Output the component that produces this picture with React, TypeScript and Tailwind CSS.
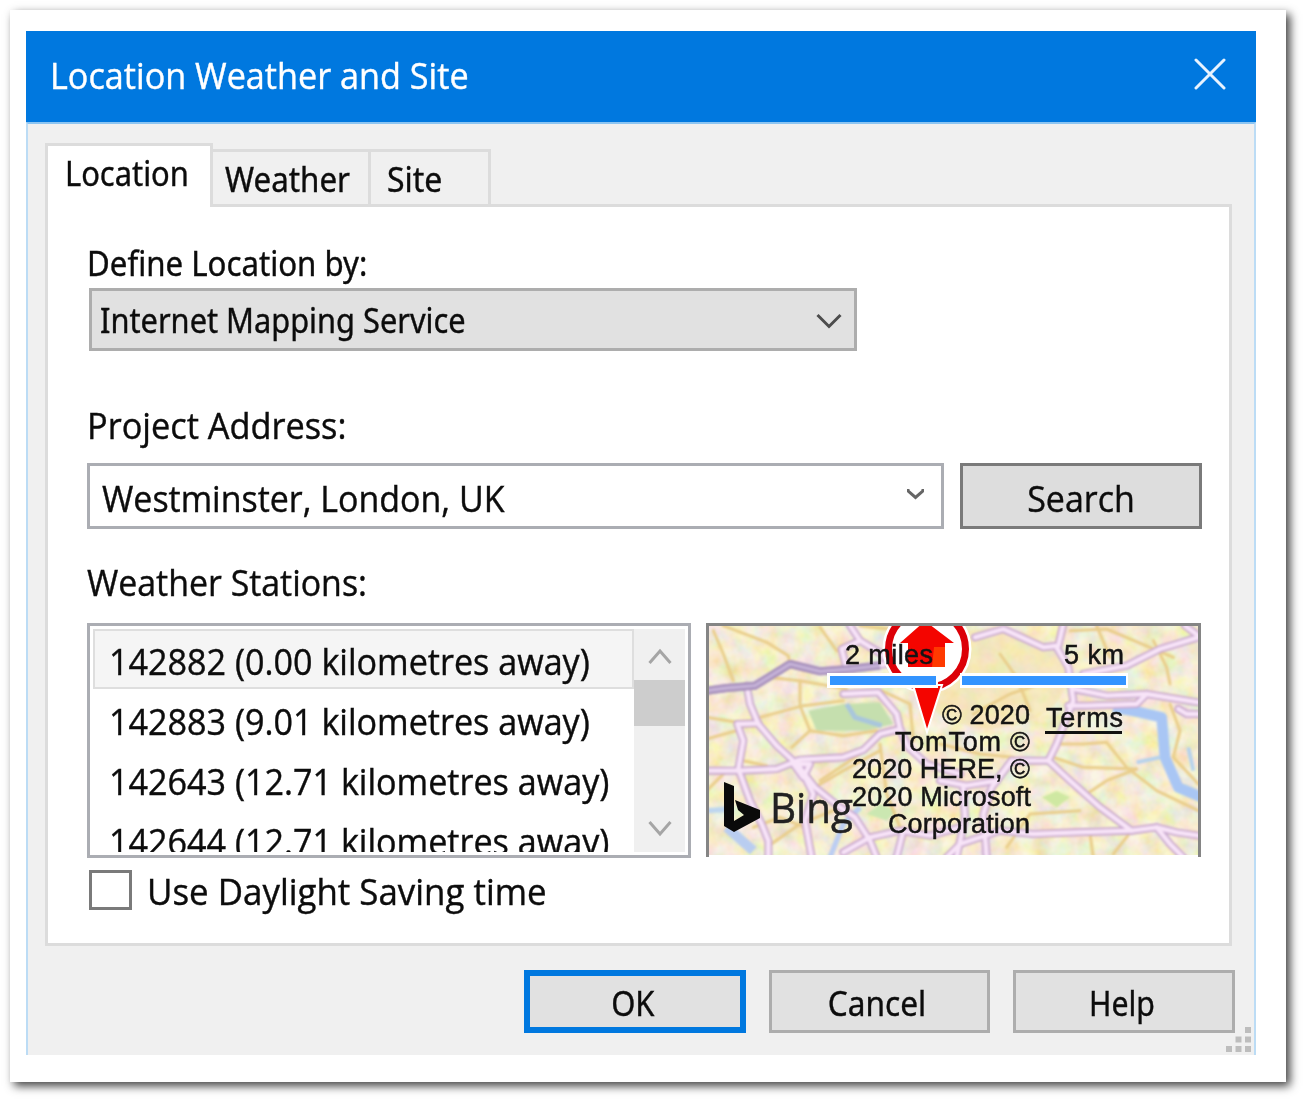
import React from "react";

const segoe = "font-['Open_Sans',sans-serif] text-[36px] leading-[40px] whitespace-nowrap inline-block [-webkit-text-stroke:0.4px]";
const tahoma = "font-['Noto_Sans',sans-serif] text-[34px] leading-[40px] whitespace-nowrap inline-block [-webkit-text-stroke:0.4px]";

const stations = [
  { text: "142882 (0.00 kilometres away)", selected: true },
  { text: "142883 (9.01 kilometres away)", selected: false },
  { text: "142643 (12.71 kilometres away)", selected: false },
  { text: "142644 (12.71 kilometres away)", selected: false },
];

const westRoads = [
  "M20 230 L80 222 L165 215 L205 190 L270 150 L360 172 L450 165 L560 150",
  "M140 215 L150 270 L175 330 L230 395 L290 450 L345 520 L420 580 L465 610 L510 680 L530 730",
  "M175 328 L112 330 L130 380 L115 465 L150 560 L185 630 L205 680 L205 730",
  "M20 470 L120 470 L230 465 L300 437 L430 430 L490 408 L540 360 L600 345 L590 300 L535 235 L430 240",
  "M290 440 L340 540 L315 620 L335 730",
  "M450 35 L480 80 L425 105 L440 165",
  "M480 80 L545 120 L600 190",
  "M600 345 L625 400 L680 450 L780 480",
  "M430 715 L510 670 L600 650 L690 665 L780 640",
  "M610 650 L590 730",
  "M280 450 L330 450 L310 490 Z",
];
const eastRoads = [
  "M105 70 L190 45 L310 100 L355 95 L370 30",
  "M350 100 L385 160 L400 260 L350 390 L325 440",
  "M430 180 L560 155 L660 105 L775 70",
  "M400 225 L500 245 L620 240 L775 265",
  "M385 275 L440 275 L590 270 L620 240",
  "M0 500 L80 515 L170 500 L215 440 L325 440 L390 500 L480 580 L575 650 L650 640 L710 655 L775 665",
  "M215 440 L155 520 L130 600 L140 730",
  "M575 650 L410 655 L280 660 L180 650 L60 690 L20 730",
  "M650 640 L690 690 L730 730",
  "M70 520 L75 610 L50 730",
  "M735 35 L775 65",
  "M715 285 L740 300 L775 300",
];
const westLanes = [
  "M70 35 L200 85 L265 125 L270 150", "M40 50 L70 120 L100 200", "M20 310 L110 325",
  "M20 375 L110 350", "M205 190 L300 200 L440 225", "M180 310 L310 275 L430 260",
  "M300 200 L300 275 L330 350 L275 400", "M330 350 L430 365 L530 350", "M130 440 L200 455",
  "M345 520 L430 470 L540 410", "M200 700 L300 630 L400 590", "M360 40 L410 110",
  "M20 530 L80 470", "M540 390 L560 540 L600 640", "M480 35 L610 50", "M360 500 L450 440 L480 420",
  "M160 640 L240 610 L315 640", "M545 230 L630 270 L640 380",
];
const eastLanes = [
  "M350 390 L430 390 L500 385 L560 460 L650 530 L775 590", "M340 430 L430 460 L590 465",
  "M590 465 L500 500 L440 540", "M690 270 L720 350 L700 430 L775 510", "M470 35 L510 130",
  "M640 80 L680 160 L690 210", "M180 120 L230 190 L270 290", "M100 300 L210 240 L390 180",
  "M200 700 L270 600 L420 590", "M450 660 L460 730", "M520 720 L575 650", "M0 390 L120 420 L220 430",
  "M390 50 L500 45 L700 130",
];

function Roads({ lanes, roads }: { lanes: string[]; roads: string[] }) {
  return (
    <g fill="none" strokeLinejoin="round" strokeLinecap="round">
      {lanes.map((d) => <path key={d} d={d} stroke="#e9cd8a" strokeWidth="9" />)}
      {roads.map((d) => <path key={d} d={d} stroke="#c9a8cf" strokeWidth="24" />)}
      {roads.map((d) => <path key={d} d={d} stroke="#f8e4f8" strokeWidth="13" />)}
    </g>
  );
}

function MapView() {
  return (
    <svg viewBox="0 0 495 234" className="block h-[234px] w-[495px]">
      <defs>
        <filter id="mottle" x="0" y="0" width="100%" height="100%">
          <feTurbulence type="fractalNoise" baseFrequency="0.055" numOctaves="3" seed="7" />
          <feColorMatrix values="0.7 0 0 0 0.57  0 0.6 0 0 0.57  0 0 1.1 0 0.18  0 0 0 0 1" />
        </filter>
        <filter id="soft"><feGaussianBlur stdDeviation="1" /></filter>
        <clipPath id="view"><rect x="2" y="2" width="491" height="230" /></clipPath>
      </defs>
      <g clipPath="url(#view)">
        <rect width="495" height="234" fill="#f3e8bd" />
        <rect width="495" height="234" filter="url(#mottle)" opacity="0.6" />
        <g filter="url(#soft)">
          <ellipse cx="285" cy="55" rx="75" ry="50" fill="#f5dfa2" opacity="0.45" />
          <g transform="translate(-6 -9) scale(.33333)">
            <path d="M325 290 L430 270 L540 265 L580 330 L500 350 L350 350 Z" fill="#c5dfae" />
            <path d="M440 270 L465 310 L545 335" fill="none" stroke="#a9c6dc" strokeWidth="15" />
            <path d="M80 640 L160 710" stroke="#b9cdf0" strokeWidth="30" />
            <path d="M390 730 L430 630 L480 580" fill="none" stroke="#bccdf2" strokeWidth="16" />
            <path d="M20 590 L100 585" stroke="#bdd5ef" strokeWidth="16" />
            <path d="M540 570 L590 590 L560 620 L500 600Z" fill="#cbe7b1" />
          </g>
          <g transform="translate(234 -9) scale(.33333)">
            <path d="M520 280 L600 295 L665 310 L675 430 L715 520 L785 550" fill="none" stroke="#a9c6f4" strokeWidth="32" strokeLinejoin="round" />
            <path d="M590 445 L660 430 M745 400 L760 470" fill="none" stroke="#b5d2ec" strokeWidth="12" />
            <path d="M305 550 L350 530 L390 550 L350 580Z" fill="#cfe8a2" />
          </g>
          <g transform="translate(-6 -9) scale(.33333)">
            <Roads lanes={westLanes} roads={westRoads} />
            <path d="M20 230 L80 222 L165 215 L205 190 L270 150 L360 172 L450 165 L540 155" fill="none" stroke="#a48dba" strokeWidth="24" strokeLinejoin="round" />
            <path d="M20 230 L80 222 L165 215 L205 190 L270 150 L360 172 L450 165 L540 155" fill="none" stroke="#c6b3d8" strokeWidth="10" strokeLinejoin="round" />
          </g>
          <g transform="translate(234 -9) scale(.33333)">
            <Roads lanes={eastLanes} roads={eastRoads} />
          </g>
        </g>

        <circle cx="221" cy="26" r="39" fill="none" stroke="#fff" strokeWidth="11" />
        <circle cx="221" cy="26" r="37" fill="#fff" />
        <circle cx="221" cy="26" r="38.5" fill="none" stroke="#dc0008" strokeWidth="7" />
        <path d="M219 -2 L248 20 L239 20 L239 44 L202 44 L202 20 L194 20 Z" fill="#f40500" />
        <path d="M228 24 H239 V44 H226 Z" fill="#ff3a00" />
        <path d="M207 62 L236 62 L221 109 Z" fill="#f40500" stroke="#fff" strokeWidth="2" />

        <rect x="121" y="50" width="111" height="15" fill="#fff" />
        <rect x="254" y="50" width="168" height="15" fill="#fff" />
        <rect x="124" y="53" width="106" height="9" fill="#3394ff" />
        <rect x="256" y="53" width="164" height="9" fill="#3394ff" />

        <g fontFamily="Liberation Sans, Arial, sans-serif" fontSize="27" fill="#141414" stroke="#141414" strokeWidth="0.5">
          <text x="139" y="41" textLength="88">2 miles</text>
          <text x="358" y="41" textLength="60">5 km</text>
          <text x="236" y="101" textLength="88">© 2020</text>
          <text x="189" y="128" textLength="135">TomTom ©</text>
          <text x="146" y="155" textLength="178">2020 HERE, ©</text>
          <text x="146" y="183" textLength="179">2020 Microsoft</text>
          <text x="182" y="210" textLength="142">Corporation</text>
          <text x="340" y="104" textLength="77">Terms</text>
        </g>
        <rect x="339" y="108" width="77" height="3" fill="#111" />

        <path d="M18 159 L28 163 L28 198 L38 192 L32 187 L29 177 L54 187 L54 195 L28 209 L18 203 Z" fill="#0a0a0a" />
        <text x="64" y="200" fontFamily="Open Sans, sans-serif" fontSize="42" fill="#222" stroke="#222" strokeWidth="0.5" textLength="83" lengthAdjust="spacingAndGlyphs">Bing</text>
      </g>
      <path d="M1.5 234 V1.5 H493.5 V234" fill="none" stroke="#858585" strokeWidth="3" />
    </svg>
  );
}

function Chevron({ className, d, box, width }: { className: string; d: string; box: string; width: number }) {
  return (
    <svg viewBox={box} className={className} fill="none" stroke="currentColor" strokeWidth={width}>
      <path d={d} />
    </svg>
  );
}

export default function App() {
  return (
    <div className="h-[1102px] w-[1306px] overflow-hidden bg-white pt-[10px] pl-[10px] text-[#0c0c0c]">
      <div className="h-[1072px] w-[1276px] bg-white pt-[21px] pl-4 shadow-[4px_4px_9px_0px_rgba(0,0,0,0.75)]">
        <div className="flex h-[1024px] w-[1230px] flex-col bg-[#f0f0f0]">
          <header className="flex h-[91px] shrink-0 items-center justify-between bg-[#0078df] pb-[5px] pr-[30px] pl-6 text-white">
            <span className={`${segoe} mt-1 origin-left scale-x-[0.95]`}>Location Weather and Site</span>
            <svg viewBox="0 0 32 32" className="h-8 w-8" stroke="#e8f3ff" strokeWidth="3" strokeLinecap="round">
              <path d="M2 2 L30 30 M30 2 L2 30" />
            </svg>
          </header>

          <main className="relative flex-1 border-x-2 border-t-2 border-x-[#bcdcf5] border-t-[#8cc5f2] pt-[19px] pl-[17px]">
            <nav className="flex h-[61px] items-end">
              <div className="relative z-10 -mb-[3px] h-[64px] w-[168px] self-start border-x-[3px] border-t-[3px] border-[#dcdcdc] bg-white pt-[7px] pl-[17px]">
                <span className={`${tahoma} origin-left scale-x-[0.908]`}>Location</span>
              </div>
              <div className="h-[55px] w-[158px] border-t-[3px] border-r-[3px] border-[#dcdcdc] pt-[7px] pl-3">
                <span className={`${tahoma} origin-left scale-x-[0.921]`}>Weather</span>
              </div>
              <div className="h-[55px] w-[120px] border-t-[3px] border-r-[3px] border-[#dcdcdc] pt-[7px] pl-[16px]">
                <span className={`${tahoma} origin-left scale-x-[0.94]`}>Site</span>
              </div>
            </nav>

            <section className="flex h-[742px] w-[1187px] flex-col border-[3px] border-[#dcdcdc] bg-white pt-9 pl-[39px]">
              <div className="h-10">
                <span className={`${tahoma} origin-left scale-x-[0.918]`}>Define Location by:</span>
              </div>
              <div className="mt-[5px] ml-[2px] flex h-[63px] w-[768px] items-center justify-between border-[3px] border-[#adadad] bg-[#e1e1e1] pr-3 pl-2">
                <span className={`${tahoma} mt-px origin-left scale-x-[0.905]`}>Internet Mapping Service</span>
                <Chevron className="h-[18px] w-[26px] text-[#4c4c4c]" box="0 0 26 18" d="M1.5 4 L13 15.5 L24.5 4" width={3} />
              </div>

              <div className="mt-[55px] h-10">
                <span className={`${segoe} origin-left scale-x-[0.953]`}>Project Address:</span>
              </div>
              <div className="mt-[17px] flex h-[66px] gap-4">
                <div className="flex w-[857px] items-center justify-between border-[3px] border-[#abadb3] pr-[17px] pl-3">
                  <span className={`${segoe} mt-[5px] origin-left scale-x-[0.943]`}>Westminster, London, UK</span>
                  <Chevron className="mb-1 h-[12px] w-[17px] text-[#666]" box="0 0 17 12" d="M1 1 V3 L8.5 9.5 L16 3 V1" width={3} />
                </div>
                <div className="flex w-[242px] items-center justify-center border-[3px] border-[#7a7a7a] bg-[#dddddd]">
                  <span className={`${segoe} mt-[5px] scale-x-[0.945]`}>Search</span>
                </div>
              </div>

              <div className="mt-[34px] h-10">
                <span className={`${segoe} origin-left scale-x-[0.941]`}>Weather Stations:</span>
              </div>
              <div className="mt-[20px] flex h-[235px] gap-[15px]">
                <div className="flex w-[604px] border-[3px] border-[#abadb3] p-[3px]">
                  <ul className="h-[223px] w-[541px] overflow-hidden">
                    {stations.map((s) => (
                      <li
                        key={s.text}
                        className={
                          s.selected
                            ? "flex h-[60px] items-center border-2 border-[#dedede] bg-[#f5f5f5] pl-[14px]"
                            : "flex h-[60px] items-center border-2 border-transparent pl-[14px]"
                        }
                      >
                        <span className={`${segoe} mt-[5px] origin-left scale-x-[0.948]`}>{s.text}</span>
                      </li>
                    ))}
                  </ul>
                  <div className="flex w-[51px] flex-col items-center bg-[#f0f0f0] text-[#a5a5a5]">
                    <Chevron className="mt-[17px] h-[20px] w-[24px]" box="0 0 24 20" d="M1.5 17 L12 5 L22.5 17" width={3} />
                    <div className="mt-[14px] h-[46px] w-full bg-[#cdcdcd]" />
                    <Chevron className="mt-auto mb-[13px] h-[20px] w-[24px]" box="0 0 24 20" d="M1.5 3 L12 15 L22.5 3" width={3} />
                  </div>
                </div>
                <MapView />
              </div>

              <label className="mt-[12px] ml-[2px] flex h-10 items-center gap-[15px]">
                <span className="h-10 w-[43px] border-[3px] border-[#7a7a7a] bg-white" />
                <span className={`${segoe} mt-[3px] origin-left scale-x-[0.969]`}>Use Daylight Saving time</span>
              </label>
            </section>

            <footer className="mt-6 flex gap-[23px] pl-[479px]">
              <div className="flex h-[63px] w-[222px] items-center justify-center border-[6px] border-[#0078df] bg-[#e1e1e1]">
                <span className={`${tahoma} mt-[3px] mr-[5px] scale-x-[0.91]`}>OK</span>
              </div>
              <div className="flex h-[63px] w-[221px] items-center justify-center border-[3px] border-[#adadad] bg-[#e1e1e1]">
                <span className={`${tahoma} mt-[3px] mr-[6px] scale-x-[0.93]`}>Cancel</span>
              </div>
              <div className="flex h-[63px] w-[222px] items-center justify-center border-[3px] border-[#adadad] bg-[#e1e1e1]">
                <span className={`${tahoma} mt-[3px] mr-[4px] scale-x-[0.89]`}>Help</span>
              </div>
            </footer>

            <svg viewBox="0 0 26 26" className="absolute right-[3px] bottom-[3px] h-[26px] w-[26px]" fill="#bdbdbd">
              {[[20, 1], [10.5, 10.5], [20, 10.5], [1, 20], [10.5, 20], [20, 20]].map(([x, y]) => (
                <rect key={`${x}-${y}`} x={x} y={y} width="6" height="6" />
              ))}
            </svg>
          </main>
        </div>
      </div>
    </div>
  );
}
